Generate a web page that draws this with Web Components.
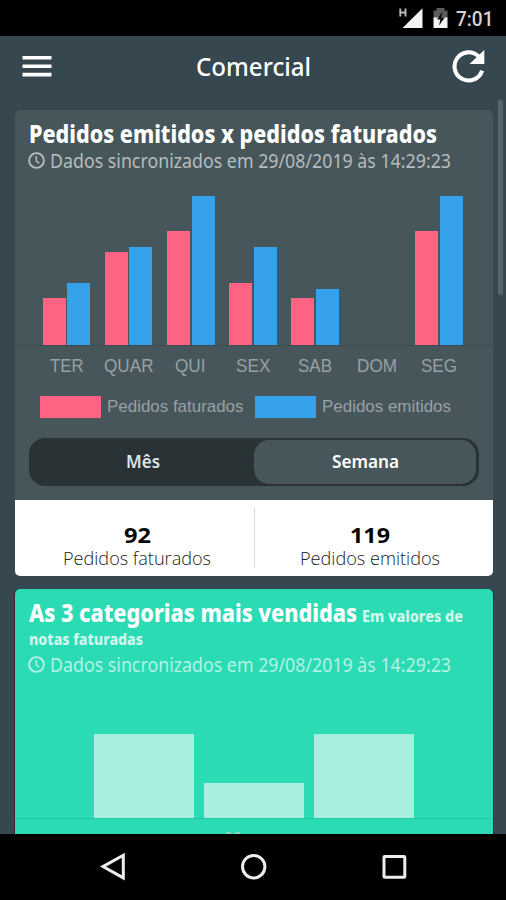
<!DOCTYPE html>
<html lang="pt-BR">
<head>
<meta charset="utf-8">
<title>Comercial</title>
<style>
html,body{margin:0;height:100%;overflow:hidden;background:#000}
body{font-family:"Noto Sans","Open Sans",sans-serif}
</style>
</head>
<body>
<app-screen></app-screen>
<script>
function define(name, html, ready) {
  const template = document.createElement('template');
  template.innerHTML = html;
  customElements.define(name, class extends HTMLElement {
    connectedCallback() {
      if (this.shadowRoot) return;
      this.attachShadow({mode: 'open'}).append(template.content.cloneNode(true));
      if (ready) ready(this, this.shadowRoot);
    }
  });
}

/* Single line of text condensed or widened to the width in its w attribute. */
define('fit-text', `
<style>
:host{display:block;flex:none;white-space:nowrap}
span{display:inline-block;transform-origin:0 50%}
</style><span><slot></slot></span>`, (el, root) => {
  const w = +el.getAttribute('w');
  const span = root.querySelector('span');
  el.style.width = w + 'px';
  span.style.transform = 'scaleX(' + w / span.getBoundingClientRect().width + ')';
});

define('status-bar', `
<style>
:host{display:flex;height:35.5px;flex:none;background:#000;justify-content:flex-end;box-sizing:border-box;padding-right:12.5px}
svg{width:54px;height:35px;margin-right:3px}
fit-text{font:500 20.5px/38px Roboto,sans-serif;color:#d4d4d4}
</style>
<svg viewBox="398.5 0 54 35"><path d="M399.8 8.5v8M405 8.5v8M399.8 12.5H405" stroke="#bbb" stroke-width="1.9" fill="none"/><path d="M422 8.3V28H402z" fill="#f4f4f4"/><path d="M436 8h8v2.5h3V19h-14v-8.5h3z" fill="#5b5b5b"/><path d="M433 17.5h14V28h-14z" fill="#f4f4f4"/><path d="M442 11.5l-5.5 8h3.3l-1.2 6 5.7-8h-3.4z" fill="#111"/></svg>
<fit-text w="37.5">7:01</fit-text>`);

define('app-header', `
<style>
:host{display:grid;grid-template-columns:1fr auto 1fr;align-items:center;height:61px;flex:none;padding:0 21px 0 22px}
fit-text{font-size:25px;line-height:34px;color:#fff;font-weight:500;margin-top:-1px}
svg{display:block}
.r{justify-self:end}
</style>
<svg width="30" height="24" viewBox="0 -.5 30 24"><path d="M.5 3.3h29M.5 11.7h29M.5 20.1h29" stroke="#fff" stroke-width="3.6"/></svg>
<fit-text w="115"><slot></slot></fit-text>
<svg class="r" width="34" height="34" viewBox="452 50 34 34"><path d="M483.1 71.6A14.1 14.1 0 1 1 479.6 57.4" fill="none" stroke="#fff" stroke-width="4.1"/><path d="M485.3 51v14H470.5z" fill="#fff"/></svg>`);

define('sync-line', `
<style>
:host{display:flex;height:27px;align-items:center;color:var(--soft)}
svg{width:17px;height:17px;margin-right:5px;margin-left:-.5px}
fit-text{font-size:19px;line-height:27px;margin-top:2px}
</style>
<svg viewBox="0 0 17 17" fill="none" stroke="currentColor"><circle cx="8.5" cy="8.5" r="7.4" stroke-width="1.9"/><path d="M8.3 4v5l3 2.2" stroke-width="1.5"/></svg>
<fit-text w="401"><slot></slot></fit-text>`);

define('bar-pair', `
<style>
:host{display:grid;grid-template-columns:23px 23px;column-gap:1.8px;align-items:end;width:48px;height:100%}
i{display:block}.a{background:#ff6384}.b{background:#36a2eb}
</style><i class="a"></i><i class="b"></i>`, (el, root) => {
  root.querySelector('.a').style.height = el.getAttribute('a') + 'px';
  root.querySelector('.b').style.height = el.getAttribute('b') + 'px';
});

define('week-chart', `
<style>
:host{display:block;margin:0 -14px}
.plot{display:flex;height:171px;padding-left:28px;column-gap:14.15px;border-bottom:1px solid #3c4c50}
.labels{display:grid;grid-template-columns:repeat(7,62.1px);margin-left:21px;padding-top:9px;justify-items:center;color:#98a1a3;font:17.5px/22px "Liberation Sans",Arial,sans-serif}
.legend{display:flex;align-items:center;height:22px;margin:19px 0 0 25.5px;color:#98a1a3;font:17px/20px "Liberation Sans",Arial,sans-serif}
.legend i{width:61px;height:22px;background:#ff6384;margin-right:6px}
.legend fit-text{margin-top:-1px}
.legend fit-text+i{background:#36a2eb;margin-left:11.5px;width:60.5px}
</style>
<div class="plot"><bar-pair a="47" b="62"></bar-pair><bar-pair a="93" b="98.5"></bar-pair><bar-pair a="114" b="149.5"></bar-pair><bar-pair a="62" b="98.5"></bar-pair><bar-pair a="47" b="56"></bar-pair><bar-pair a="0" b="0"></bar-pair><bar-pair a="114" b="149.5"></bar-pair></div>
<div class="labels"><fit-text w="33.5">TER</fit-text><fit-text w="49.5">QUAR</fit-text><fit-text w="30.5">QUI</fit-text><fit-text w="34.5">SEX</fit-text><fit-text w="34">SAB</fit-text><fit-text w="40">DOM</fit-text><fit-text w="36">SEG</fit-text></div>
<div class="legend"><i></i><fit-text w="136.5">Pedidos faturados</fit-text><i></i><fit-text w="129">Pedidos emitidos</fit-text></div>`);

define('period-switch', `
<style>
:host{display:flex;box-sizing:border-box;width:450px;height:48px;margin-top:20px;background:#293235;border-radius:16px;padding:2.2px;font-weight:600;font-size:18.5px;line-height:26px}
div{display:flex;align-items:center;justify-content:center;border-radius:15px}
fit-text{margin-top:-2px}
.off{width:222px;color:#dfe3e4;padding-left:1px}
.on{flex:1;background:#47565a;color:#fff}
</style>
<div class="off"><fit-text w="34">Mês</fit-text></div><div class="on"><fit-text w="67">Semana</fit-text></div>`);

define('stat-row', `
<style>
:host{display:grid;grid-template-columns:240px 1fr;height:76.5px;box-sizing:border-box;padding:7px 0;background:#fff;border-radius:0 0 5px 5px}
div{display:flex;flex-direction:column;align-items:center;height:61px;box-sizing:border-box;padding-top:15.5px}
.l{border-right:1px solid #ddd;padding-left:6px}
.r{padding-right:7px}
.n{font-size:22px;font-weight:700;line-height:25px;color:#050505}
.t{font:300 18.5px/21px "Open Sans","Noto Sans",sans-serif;color:#222}
</style>
<div class="l"><fit-text class="n" w="27">92</fit-text><fit-text class="t" w="148">Pedidos faturados</fit-text></div>
<div class="r"><fit-text class="n" w="40">119</fit-text><fit-text class="t" w="140">Pedidos emitidos</fit-text></div>`);

define('category-chart', `
<style>
:host{display:block;margin:0 -14px}
.plot{display:flex;align-items:flex-end;height:139.5px;padding-left:79px;gap:10.3px;border-bottom:1.5px solid #20c6a2}
i{width:100px;background:#a9efe0}
.tips{height:15px;display:flex;align-items:flex-end;gap:4px;padding-left:211px}
.tips b{width:5px;height:1.5px;background:#8bd5c3}
</style>
<div class="plot"><i style="height:83.5px"></i><i style="height:34.5px"></i><i style="height:83.5px"></i></div>
<div class="tips"><b></b><b></b></div>`);

define('info-card', `
<style>
:host{display:block;box-sizing:border-box;width:478.5px;margin-left:14.5px;padding:10px 14px 0;background:var(--card);border-radius:5px 5px 0 0;flex:none}
</style><slot></slot>`);

define('nav-bar', `
<style>
:host{display:block;height:66.5px;flex:none;background:#000}
svg{display:block}
</style>
<svg width="506" height="66" viewBox="0 834 506 66" fill="none" stroke="#ededed" stroke-width="3"><path d="M123.3 855.3v22.6L103 866.6z"/><circle cx="253.7" cy="866.7" r="11.2"/><rect x="384" y="856.4" width="20.8" height="20.8" rx=".8"/></svg>`);

define('app-screen', `
<style>
:host{display:flex;flex-direction:column;width:506px;height:900px;background:#37474f;position:relative}
main{flex:1;min-height:0;overflow:hidden;padding-top:13.5px;box-sizing:border-box}
.one{--card:#47565a;--soft:#b5bcbf;height:389.5px}
.two{--card:#2adbb4;--soft:#b5f2e4;margin-top:13px;height:260px;box-shadow:-1px 0 0 #402047,1px 0 0 #262653}
stat-row{width:478.5px;margin-left:14.5px}
.h{font-size:24px;font-weight:800;line-height:27px;color:#fff}
.s{font-size:16.3px;font-weight:800;line-height:25px;color:#d3f8ef}
.row{display:flex;align-items:baseline;gap:5.5px;height:28px}
.two sync-line{margin-top:-1px}
.thumb{position:absolute;left:498px;top:100px;width:5px;height:194.5px;border-radius:2px;background:#566469}
</style>
<status-bar></status-bar>
<app-header>Comercial</app-header>
<main>
<info-card class="one"><fit-text class="h" w="408">Pedidos emitidos x pedidos faturados</fit-text><sync-line>Dados sincronizados em 29/08/2019 às 14:29:23</sync-line><week-chart></week-chart><period-switch></period-switch></info-card>
<stat-row></stat-row>
<info-card class="two"><div class="row"><fit-text class="h" w="328">As 3 categorias mais vendidas</fit-text><fit-text class="s" w="101">Em valores de</fit-text></div><fit-text class="s" w="114">notas faturadas</fit-text><sync-line>Dados sincronizados em 29/08/2019 às 14:29:23</sync-line><category-chart></category-chart></info-card>
</main>
<nav-bar></nav-bar>
<div class="thumb"></div>`);
</script>
</body>
</html>
